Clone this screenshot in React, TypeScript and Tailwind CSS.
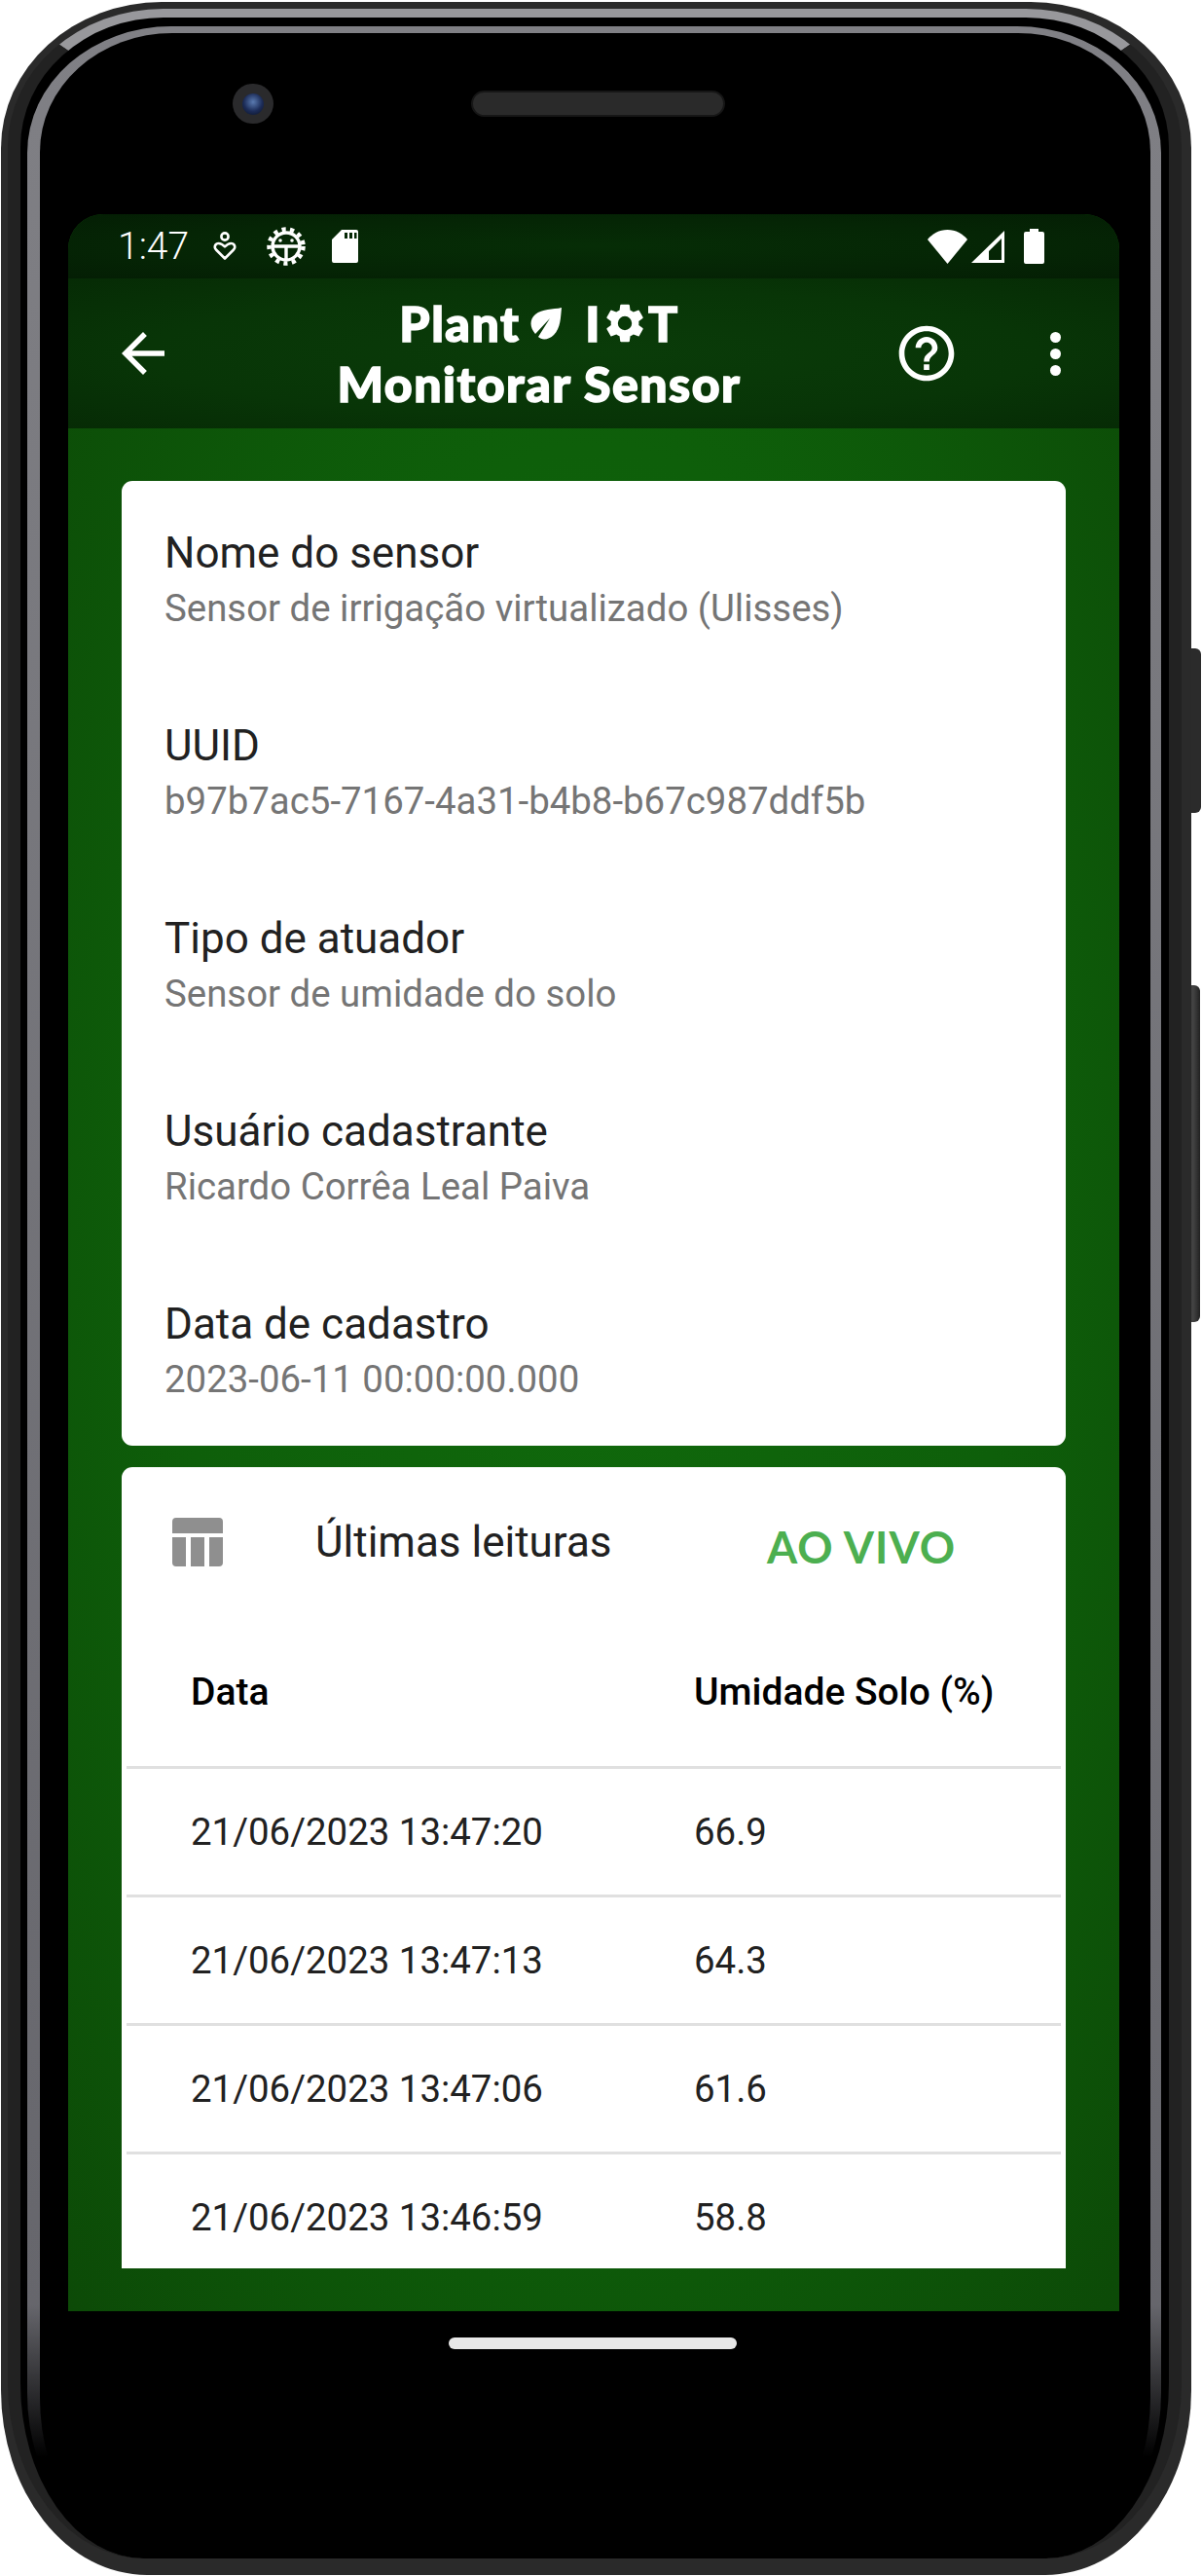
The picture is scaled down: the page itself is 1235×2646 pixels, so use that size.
const sensorInfo = [
  { label: "Nome do sensor", value: "Sensor de irrigação virtualizado (Ulisses)" },
  { label: "UUID", value: "b97b7ac5-7167-4a31-b4b8-b67c987ddf5b" },
  { label: "Tipo de atuador", value: "Sensor de umidade do solo" },
  { label: "Usuário cadastrante", value: "Ricardo Corrêa Leal Paiva" },
  { label: "Data de cadastro", value: "2023-06-11 00:00:00.000" },
];

const readings = [
  { date: "21/06/2023 13:47:20", value: "66.9" },
  { date: "21/06/2023 13:47:13", value: "64.3" },
  { date: "21/06/2023 13:47:06", value: "61.6" },
  { date: "21/06/2023 13:46:59", value: "58.8" },
];

function HeartPersonIcon() {
  return (
    <svg width="24" height="30" viewBox="0 0 24 30" fill="none" stroke="white" strokeWidth="2.6">
      <circle cx="12" cy="5" r="3.6" />
      <path d="M12 27.5 3 18.5c-2.6-3-.6-6.5 2.6-6.5 2.8 0 4.6 1.6 6.4 3.4 1.8-1.8 3.6-3.4 6.4-3.4 3.2 0 5.2 3.5 2.600 6.500z" strokeLinejoin="round" />
    </svg>
  );
}

function BugGearIcon() {
  return (
    <svg width="40" height="40" viewBox="0 0 40 40" fill="none" stroke="white">
      <circle cx="20" cy="20" r="17.5" strokeWidth="4.5" strokeDasharray="4.2 4.4" />
      <circle cx="20" cy="20" r="14" strokeWidth="3.4" />
      <path d="M6 20h28M20 20v14" strokeWidth="3.4" />
      <circle cx="14" cy="14" r="1.8" fill="white" stroke="none" />
      <circle cx="26" cy="14" r="1.8" fill="white" stroke="none" />
    </svg>
  );
}

function SdCardIcon() {
  return (
    <svg width="27" height="34" viewBox="0 0 27 34">
      <path
        fillRule="evenodd"
        fill="white"
        d="M10 0h15a2 2 0 0 1 2 2v30a2 2 0 0 1-2 2H2a2 2 0 0 1-2-2V10zM13 3v6h3V3zm5 0v6h3V3zm5 0v6h2.500V3z"
      />
    </svg>
  );
}

function WifiIcon() {
  return (
    <svg width="41" height="35" viewBox="0 0 41 35">
      <path fill="white" d="M20.500 35 0 10C5 4 12 0 20.500 0S36 4 41 10z" />
    </svg>
  );
}

function SignalIcon() {
  return (
    <svg width="34" height="33" viewBox="0 0 34 33">
      <path fill="white" fillRule="evenodd" d="M34 0v33H0zM31 8 18 21v9h13z" />
    </svg>
  );
}

function BatteryIcon() {
  return (
    <svg width="21" height="36" viewBox="0 0 21 36">
      <path fill="white" d="M6 0h9v3h4a2 2 0 0 1 2 2v29a2 2 0 0 1-2 2H2a2 2 0 0 1-2-2V5a2 2 0 0 1 2-2h4z" />
    </svg>
  );
}

function LeafIcon() {
  return (
    <svg width="33" height="33" viewBox="0 0 33 33">
      <path
        fill="white"
        d="M33 0c-1 10-1 21-8 28-5 5-12 6-16 2L21 11 6 27C0 20 0 12 6 7 13 1 24 2 33 0z"
      />
    </svg>
  );
}

function GearIcon() {
  return (
    <svg width="40" height="40" viewBox="2 2 20 20" className="mx-[4px]">
      <path
        fill="white"
        d="M19.140 12.940a7.100 7.100 0 0 0 0-1.880l2.030-1.580a.5.5 0 0 0 .12-.61l-1.920-3.320a.5.5 0 0 0-.59-.22l-2.390.96a7 7 0 0 0-1.620-.94l-.36-2.540a.5.5 0 0 0-.48-.41h-3.840a.5.5 0 0 0-.47.41l-.36 2.540a7.200 7.200 0 0 0-1.620.94l-2.390-.96a.5.5 0 0 0-.59.22L2.750 8.870a.5.5 0 0 0 .12.61l2.030 1.580a7.300 7.300 0 0 0 0 1.880l-2.030 1.580a.5.5 0 0 0-.12.61l1.920 3.320a.5.5 0 0 0 .59.22l2.390-.96a7 7 0 0 0 1.620.94l.36 2.540a.5.5 0 0 0 .48.41h3.840a.5.5 0 0 0 .47-.41l.36-2.540a7.200 7.200 0 0 0 1.620-.94l2.390.96a.5.5 0 0 0 .59-.22l1.920-3.320a.5.5 0 0 0-.12-.61zM12 15.600a3.600 3.600 0 1 1 0-7.200 3.600 3.600 0 0 1 0 7.200z"
      />
    </svg>
  );
}

function BackIcon() {
  return (
    <svg width="66" height="66" viewBox="0 0 24 24">
      <path fill="white" d="M20 11H7.830l5.590-5.590L12 4l-8 8 8 8 1.410-1.410L7.830 13H20v-2z" />
    </svg>
  );
}

function HelpIcon() {
  return (
    <svg width="68" height="68" viewBox="0 0 24 24">
      <path
        fill="white"
        d="M11 18h2v-2h-2v2zm1-16C6.480 2 2 6.480 2 12s4.480 10 10 10 10-4.480 10-10S17.520 2 12 2zm0 18c-4.410 0-8-3.590-8-8s3.590-8 8-8 8 3.590 8 8-3.590 8-8 8zm0-14c-2.210 0-4 1.790-4 4h2c0-1.100.9-2 2-2s2 .9 2 2c0 2-3 1.750-3 5h2c0-2.250 3-2.500 3-5 0-2.210-1.790-4-4-4z"
      />
    </svg>
  );
}

function TableIcon() {
  return (
    <svg width="52" height="50" viewBox="0 0 52 50">
      <path
        fill="#8f8f8f"
        d="M4 0h44a4 4 0 0 1 4 4v12H0V4a4 4 0 0 1 4-4zM0 20h14v30H4a4 4 0 0 1-4-4zM19 20h14v30H19zM38 20h14v26a4 4 0 0 1-4 4H38z"
      />
    </svg>
  );
}

function StatusBar() {
  return (
    <div className="flex h-[66px] items-center bg-[radial-gradient(ellipse_at_center,#062d06_0%,#052505_60%,#041e04_100%)] pl-[51px] text-white">
      <span className="w-[98px] text-[39px] leading-none font-light">1:47</span>
      <HeartPersonIcon />
      <span className="ml-[31px]">
        <BugGearIcon />
      </span>
      <span className="ml-[27px]">
        <SdCardIcon />
      </span>
      <div className="ml-auto mr-[77px] flex items-center gap-[4px]">
        <WifiIcon />
        <SignalIcon />
        <span className="ml-[16px]">
          <BatteryIcon />
        </span>
      </div>
    </div>
  );
}

function AppBar() {
  return (
    <div className="flex h-[154px] items-center bg-[radial-gradient(ellipse_at_center,#0a3c09_0%,#083507_60%,#062b05_100%)]">
      <div className="ml-[44px] w-[66px]">
        <BackIcon />
      </div>
      <div className="ml-[130px] flex w-[488px] flex-col items-center font-['Lato',sans-serif] text-[50px] leading-[62px] font-black tracking-[1.5px] text-white [-webkit-text-stroke:1.5px_white]">
        <div className="flex items-center">
          <span>Plant</span>
          <span className="mx-[10px]">
            <LeafIcon />
          </span>
          <span className="ml-[14px]">I</span>
          <GearIcon />
          <span>T</span>
        </div>
        <div>Monitorar Sensor</div>
      </div>
      <div className="ml-[120px]">
        <HelpIcon />
      </div>
      <div className="ml-[93px] flex flex-col gap-[6px]">
        <span className="h-[11px] w-[11px] rounded-full bg-white" />
        <span className="h-[11px] w-[11px] rounded-full bg-white" />
        <span className="h-[11px] w-[11px] rounded-full bg-white" />
      </div>
    </div>
  );
}

function InfoCard() {
  return (
    <div className="flex flex-col gap-[89px] rounded-[11px] bg-white px-[44px] pt-[46px] pb-[44px]">
      {sensorInfo.map((item) => (
        <div key={item.label}>
          <div className="text-[44px] leading-[56px] text-[#212121]">{item.label}</div>
          <div className="mt-[5px] text-[38.4px] leading-[48px] text-[#757575]">{item.value}</div>
        </div>
      ))}
    </div>
  );
}

function ReadingsCard() {
  return (
    <div className="min-h-0 flex-1 overflow-hidden rounded-t-[11px] bg-white">
      <div className="flex h-[156px] items-center pl-[52px]">
        <div className="mb-[2px]">
          <TableIcon />
        </div>
        <span className="mb-[3px] ml-[95px] text-[44px] text-[#212121]">Últimas leituras</span>
        <span className="mt-[8px] ml-auto mr-[113px] font-['Lato',sans-serif] text-[45px] leading-none font-bold tracking-[1px] text-[#4caf50]">
          AO VIVO
        </span>
      </div>
      <div className="mx-[5px]">
        <div className="grid h-[154px] grid-cols-[517px_1fr] items-center border-b-[3px] border-[#e0e0e0] pl-[66px] text-[39px] font-medium text-black">
          <span>Data</span>
          <span>Umidade Solo (%)</span>
        </div>
        {readings.map((row) => (
          <div
            key={row.date}
            className="grid h-[132px] grid-cols-[517px_1fr] items-center border-b-[3px] border-[#e0e0e0] pl-[66px] text-[38.4px] text-[#212121]"
          >
            <span>{row.date}</span>
            <span>{row.value}</span>
          </div>
        ))}
      </div>
    </div>
  );
}

export default function App() {
  return (
    <div className="relative h-[2646px] w-[1235px] overflow-hidden bg-white pt-[2px] pl-[1px] font-['Roboto',sans-serif]">
      {/* side buttons */}
      <div className="absolute top-[666px] left-[1215px] h-[169px] w-[19px] rounded-r-[6px] bg-[#2b2b2b]" />
      <div className="absolute top-[1012px] left-[1215px] h-[346px] w-[18px] rounded-r-[6px] bg-[linear-gradient(90deg,#222,#444_60%,#222)]" />

      <div className="relative h-[2643px] w-[1223px] rounded-[165px_165px_150px_150px/150px_150px_190px_190px] bg-[#2a2a2a] pt-[7px] pr-[10px] pb-[17px] pl-[7px]">
        <div className="h-full rounded-[160px_160px_140px_140px/142px_142px_180px_180px] border-x-[13px] border-t-[9px] border-x-[#222] border-t-[#98989c] bg-black pt-[9px] pr-[8px] pl-[7px]">
          {/* grey inner ring, fades out towards the chin */}
          <div className="h-full rounded-[148px_148px_130px_130px/130px_130px_170px_170px] bg-[linear-gradient(180deg,#808085_0%,#66666c_90%,#000_96%)] pt-[7px] pr-[11px] pl-[13px]">
            <div className="h-full rounded-[136px_136px_120px_120px/122px_122px_165px_165px] bg-black">
              <div className="flex h-[186px] items-start pt-[52px]">
                <div className="ml-[198px] flex h-[41px] w-[42px] items-center justify-center rounded-full bg-[#2a2a2c]">
                  <div className="h-[22px] w-[22px] rounded-full bg-[radial-gradient(circle_at_50%_40%,#5a7ab0_0%,#1c2c58_55%,#0a1020_100%)]" />
                </div>
                <div className="mt-[7px] ml-[203px] h-[27px] w-[261px] rounded-full border-2 border-[#161616] bg-[#2a2a2a]" />
              </div>

              <div className="ml-[29px] flex h-[2154px] w-[1080px] flex-col overflow-hidden rounded-t-[36px] bg-[radial-gradient(ellipse_at_center,#10690c_0%,#0e5f0a_55%,#0c4a07_100%)]">
                <StatusBar />
                <AppBar />
                <div className="flex min-h-0 flex-1 flex-col gap-[22px] px-[55px] pt-[54px] pb-[44px]">
                  <InfoCard />
                  <ReadingsCard />
                </div>
              </div>

              <div className="mt-[27px] ml-[420px] h-[12px] w-[296px] rounded-full bg-[#e8e8e8]" />
            </div>
          </div>
        </div>
      </div>
    </div>
  );
}
